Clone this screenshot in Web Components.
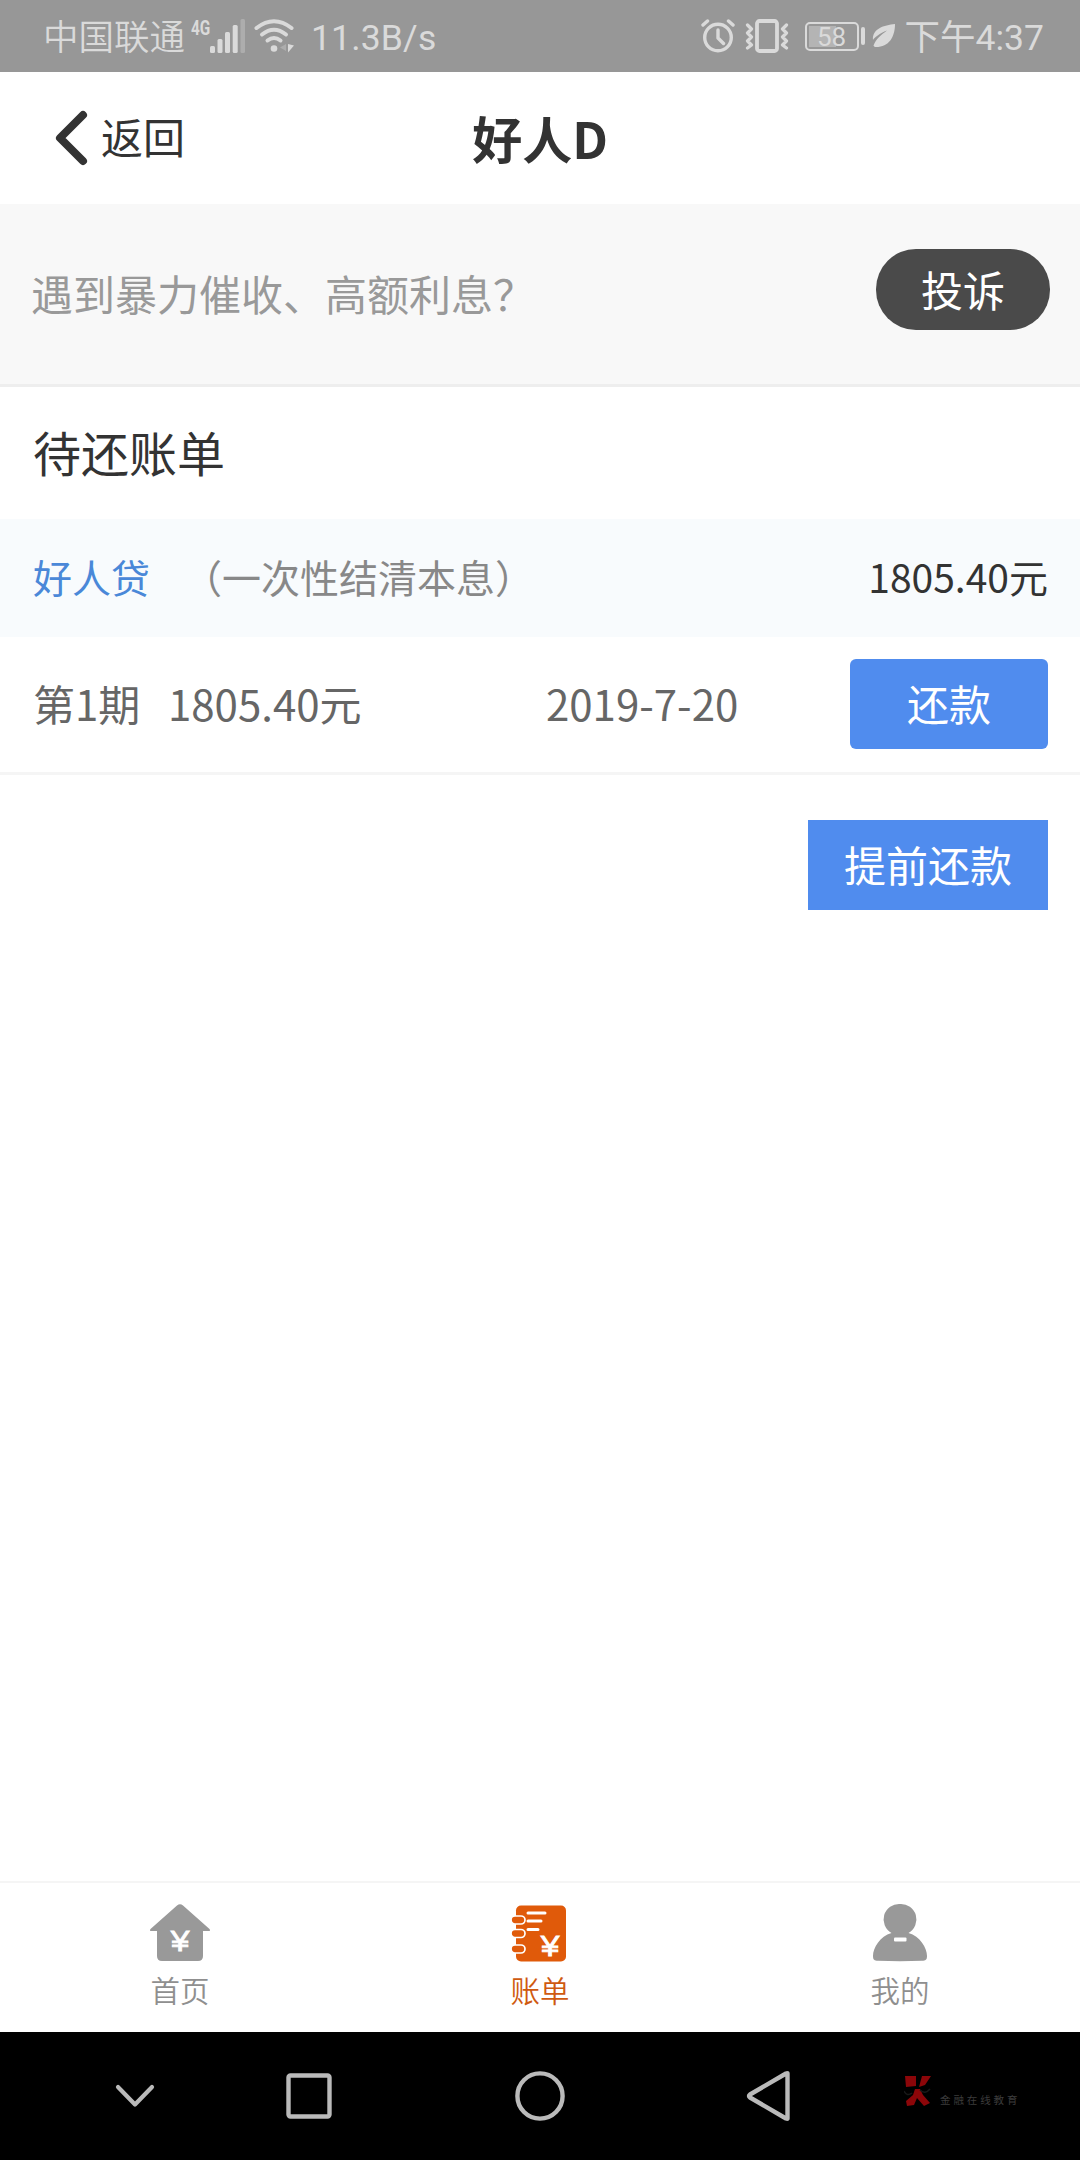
<!DOCTYPE html>
<html lang="zh-CN">
<head>
<meta charset="UTF-8">
<title>好人D</title>
<style>
    body {
        margin: 0;
        background: #fff;
        font-family: "Noto Sans CJK SC", "Noto Sans", sans-serif;
        color: #333;
    }
</style>
</head>
<body>
<loan-app></loan-app>

<script>
/**
 * Base: renders its template into an open shadow root
 */
class BaseElement extends HTMLElement {
    constructor() {
        super();
        this.attachShadow({ mode: 'open' });
    }

    connectedCallback() {
        this.shadowRoot.innerHTML = this.template();
    }
}

// Status bar
class StatusBar extends BaseElement {
    template() {
        return `
            <style>
                :host {
                    display: flex;
                    align-items: center;
                    height: 72px;
                    box-sizing: border-box;
                    padding: 0 36px 0 43px;
                    background: #979797;
                    color: #dadada;
                    font: 400 35.5px/72px Roboto, "Noto Sans CJK SC", sans-serif;
                    white-space: nowrap;
                }
                svg { display: block; flex: none; }
                .carrier, .speed, .time { padding-top: 3px; }
                .carrier { width: 148px; font-weight: 350; }
                .net {
                    width: 19px;
                    height: 36px;
                    font: 700 20px/20px Roboto, sans-serif;
                }
                .net span {
                    display: block;
                    transform: scaleX(0.77);
                    transform-origin: left;
                }
                .wifi { margin-left: 9px; }
                .speed { margin-left: 16px; letter-spacing: 0.15px; }
                .right { display: flex; align-items: center; margin-left: auto; }
                .shake { margin-left: 10px; }
                .battery {
                    display: flex;
                    align-items: center;
                    margin-left: 16px;
                }
                .cell {
                    width: 54px;
                    height: 29px;
                    box-sizing: border-box;
                    border: 2px solid #dadada;
                    border-radius: 5px;
                    background: linear-gradient(#b4b4b4, #b4b4b4) 2px 2px / 27px 21px no-repeat;
                    font: 400 26px/26px Roboto, sans-serif;
                    text-align: center;
                }
                .tip {
                    width: 4px;
                    height: 18px;
                    margin-left: 2px;
                    border-radius: 2px;
                    background: #dadada;
                }
                .leaf { margin: -2px 0 0 7px; }
                .time { margin-left: 9px; }
            </style>
            <span class="carrier">中国联通</span>
            <span class="net"><span>4G</span></span>
            <svg width="35" height="34" viewBox="0 0 35 34" fill="#dadada">
                <rect x="0" y="27" width="5" height="7" rx="1.5"/>
                <rect x="7.5" y="20" width="5" height="14" rx="1.5"/>
                <rect x="15" y="13" width="5" height="21" rx="1.5"/>
                <rect x="22.7" y="6" width="5" height="28" rx="1.5"/>
                <rect x="30.5" y="0" width="4.5" height="34" rx="1.5" fill="#adadad"/>
            </svg>
            <svg class="wifi" width="41" height="34" viewBox="0 0 41 34" fill="none" stroke="#dadada" stroke-width="4" stroke-linecap="round">
                <path d="M2.5 9Q20 -4.500 37.500 9"/>
                <path d="M8 15.500Q20 6 32 15.500"/>
                <path d="M13.500 21.500Q20 16.500 26.500 21.500"/>
                <circle cx="20" cy="29.500" r="3.300" fill="#dadada" stroke="none"/>
                <path d="M32 25v7l-6-3.500z" fill="#adadad" stroke="none"/>
                <path d="M34 25l6 1.500-6 7z" fill="#dadada" stroke="none"/>
            </svg>
            <span class="speed">11.3B/s</span>
            <div class="right">
                <svg width="34" height="34" viewBox="0 0 34 34" fill="none" stroke="#dadada" stroke-width="3.400" stroke-linecap="round" stroke-linejoin="round">
                    <circle cx="17" cy="18.500" r="13.300"/>
                    <path d="M17 11v8l5.500 5.500M2 6l4.500-4M32 6l-4.500-4"/>
                </svg>
                <svg class="shake" width="44" height="34" viewBox="0 0 44 34" fill="none" stroke="#dadada" stroke-width="3.200" stroke-linecap="round" stroke-linejoin="round">
                    <rect x="12" y="2" width="20" height="30" rx="2.500" stroke-width="3.800"/>
                    <path d="M2.500 6l4 4-4 4 4 4-4 4 4 4-4 3M41.500 6l-4 4 4 4-4 4 4 4-4 4 4 3"/>
                </svg>
                <div class="battery">
                    <div class="cell">58</div>
                    <div class="tip"></div>
                </div>
                <svg class="leaf" width="24" height="25" viewBox="0 0 24 25">
                    <path d="M23 1C12 2 0 6 1 17c1 -2 7-7 14-9.500C9 12 4 16 1.500 22.500c.5 1.500 1.500 1.500 2.500 1.500C17 24 23 14 23 1z" fill="#dadada"/>
                </svg>
                <span class="time">下午4:37</span>
            </div>
        `;
    }
}

// Page header with back link
class PageHeader extends BaseElement {
    template() {
        return `
            <style>
                :host {
                    display: grid;
                    grid-template-columns: 1fr auto 1fr;
                    align-items: center;
                    height: 132px;
                    background: #fff;
                }
                .back {
                    display: flex;
                    align-items: center;
                    gap: 13px;
                    padding-left: 54px;
                    font-size: 42px;
                    line-height: 60px;
                }
                .back span { padding-bottom: 4px; }
                svg { display: block; }
                h1 {
                    margin: 0;
                    padding-bottom: 3px;
                    font-size: 50px;
                    font-weight: 700;
                    line-height: 70px;
                }
            </style>
            <div class="back">
                <svg width="34" height="56" viewBox="0 0 34 56" fill="none" stroke="#333" stroke-width="8" stroke-linecap="round" stroke-linejoin="round">
                    <path d="M29 5L6 28l23 23"/>
                </svg>
                <span>返回</span>
            </div>
            <h1><slot></slot></h1>
        `;
    }
}

// Complaint banner
class ComplaintBanner extends BaseElement {
    template() {
        return `
            <style>
                :host {
                    display: flex;
                    justify-content: space-between;
                    align-items: flex-start;
                    height: 183px;
                    box-sizing: border-box;
                    padding: 45px 30px 0 31px;
                    background: #f8f8f8;
                    border-bottom: 3px solid #eee;
                    font-size: 42px;
                }
                .text {
                    padding-top: 14px;
                    line-height: 60px;
                    color: #999;
                }
                button {
                    width: 174px;
                    height: 81px;
                    padding: 0 0 2px;
                    border: 0;
                    border-radius: 40px;
                    background: #4a4a4a;
                    color: #fff;
                    font: inherit;
                    line-height: 78px;
                }
            </style>
            <span class="text"><slot></slot></span>
            <button>投诉</button>
        `;
    }
}

class BlueButton extends BaseElement {
    template() {
        return `
            <style>
                :host { display: block; width: 240px; height: 90px; }
                :host([small]) { width: 198px; }
                button {
                    display: block;
                    width: 100%;
                    height: 100%;
                    padding: 0 0 2px;
                    border: 0;
                    background: #508cee;
                    color: #fff;
                    font: inherit;
                    font-size: 42px;
                    line-height: 88px;
                }
                :host([small]) button { border-radius: 6px; }
            </style>
            <button><slot></slot></button>
        `;
    }
}

// Pending bills
class BillList extends BaseElement {
    template() {
        return `
            <style>
                :host { display: block; }
                h2 {
                    height: 132px;
                    margin: 0;
                    padding-left: 33px;
                    font-size: 48px;
                    font-weight: 400;
                    line-height: 129px;
                }
                .product {
                    display: flex;
                    height: 118px;
                    padding: 0 32px 0 33px;
                    background: #f8fbfd;
                    font-size: 39px;
                    line-height: 115px;
                }
                .name { color: #4a88d8; }
                .type { margin-left: 33px; color: #888; }
                .total { margin-left: auto; }
                .term {
                    display: grid;
                    grid-template-columns: 135px 378px 1fr auto;
                    align-items: center;
                    height: 134px;
                    padding: 0 32px 1px 33px;
                    border-bottom: 3px solid #f5f5f5;
                    font-size: 42px;
                    color: #666;
                }
                .term span { padding-bottom: 4px; }
                .actions {
                    display: flex;
                    justify-content: flex-end;
                    padding: 45px 32px 0;
                }
            </style>
            <h2>待还账单</h2>
            <div class="product">
                <span class="name">好人贷</span>
                <span class="type">（一次性结清本息）</span>
                <span class="total">1805.40元</span>
            </div>
            <div class="term">
                <span>第1期</span>
                <span>1805.40元</span>
                <span>2019-7-20</span>
                <blue-button small>还款</blue-button>
            </div>
            <div class="actions">
                <blue-button>提前还款</blue-button>
            </div>
        `;
    }
}

// One tab; the icon comes in through the slot
class TabItem extends BaseElement {
    template() {
        return `
            <style>
                :host {
                    display: flex;
                    flex-direction: column;
                    align-items: center;
                    padding-top: 20px;
                    color: #8f8f8f;
                    font-size: 29.5px;
                    font-weight: 350;
                    line-height: 40px;
                }
                :host([active]) { color: #cf5a10; }
                ::slotted(svg) { display: block; margin-bottom: 6px; }
            </style>
            <slot></slot>
            <span>${this.getAttribute('label')}</span>
        `;
    }
}

class TabBar extends BaseElement {
    template() {
        return `
            <style>
                :host {
                    display: grid;
                    grid-template-columns: repeat(3, 1fr);
                    height: 151px;
                    box-sizing: border-box;
                    border-top: 2px solid #f5f5f5;
                    background: #fff;
                }
                svg { overflow: visible; }
                text {
                    font: 400 30px "Liberation Sans", sans-serif;
                    fill: #fff;
                    stroke: #fff;
                    stroke-width: 0.8px;
                }
            </style>
            <tab-item label="首页">
                <svg width="62" height="60" viewBox="0 0 62 60">
                    <path d="M28 2.500q3-2.500 6 0L60.500 26q1.500 2-1 2H54v25q0 5-5 5H13q-5 0-5-5V28H2.500q-2.500 0-1-2z" fill="#999"/>
                    <text transform="translate(31 48) scale(1.120 1)" text-anchor="middle">¥</text>
                </svg>
            </tab-item>
            <tab-item label="账单" active>
                <svg width="62" height="60" viewBox="0 0 62 60">
                    <rect x="7" y="2.500" width="50" height="56" rx="5" fill="#e05a0a"/>
                    <g fill="#e05a0a" stroke="#fff" stroke-width="1.700">
                        <rect x="2" y="13" width="14" height="8" rx="4"/>
                        <rect x="2" y="26.500" width="14" height="8" rx="4"/>
                        <rect x="2" y="42" width="14" height="8" rx="4"/>
                    </g>
                    <path d="M19 10h17M19 18h13M19 26.500h10" stroke="#fff" stroke-width="3" stroke-linecap="round"/>
                    <text transform="translate(41 52.500) scale(1.120 1)" text-anchor="middle">¥</text>
                </svg>
            </tab-item>
            <tab-item label="我的">
                <svg width="62" height="60" viewBox="0 0 62 60">
                    <path d="M31 1a15.500 15.500 0 0 1 8.500 29C51 33 58 45 58 53c0 4-1.500 4.500-5 4.800q-22 .8-44 0C5.500 57.500 4 57 4 53c0-8 7-20 18.500-23A15.500 15.500 0 0 1 31 1z" fill="#999"/>
                    <rect x="25" y="34.500" width="12.500" height="4" rx="1" fill="#fff"/>
                </svg>
            </tab-item>
        `;
    }
}

// Android navigation keys and watermark
class SystemNav extends BaseElement {
    template() {
        return `
            <style>
                :host {
                    display: flex;
                    align-items: center;
                    height: 128px;
                    box-sizing: border-box;
                    padding-left: 115px;
                    background: #000;
                }
                svg { display: block; flex: none; }
                .recent { margin-left: 130px; }
                .home { margin-left: 182px; }
                .prev { margin-left: 181px; }
                .mark {
                    display: flex;
                    align-items: flex-end;
                    margin-left: 112px;
                    height: 44px;
                }
                .mark svg { margin-bottom: 11px; }
                .mark span {
                    margin: 0 0 10px 8px;
                    color: #3c3c3c;
                    font-size: 10.500px;
                    line-height: 16px;
                    letter-spacing: 2.900px;
                }
            </style>
            <svg width="40" height="24" viewBox="0 0 40 24" fill="none" stroke="#bababa" stroke-width="4.200" stroke-linecap="round" stroke-linejoin="round">
                <path d="M3 3l17 17.500L37 3"/>
            </svg>
            <svg class="recent" width="48" height="48" viewBox="0 0 48 48" fill="none" stroke="#bababa" stroke-width="4.400">
                <rect x="3.500" y="3.500" width="41" height="41" rx="2"/>
            </svg>
            <svg class="home" width="50" height="50" viewBox="0 0 50 50" fill="none" stroke="#bababa" stroke-width="4.400">
                <circle cx="25" cy="25" r="22.600"/>
            </svg>
            <svg class="prev" width="46" height="50" viewBox="0 0 46 50" fill="none" stroke="#bababa" stroke-width="4.400" stroke-linejoin="round">
                <path d="M41.500 2.500q0-.5-1.500 0L4 23.500q-2 1.500 0 3L40 47.500q1.500.5 1.500 0z"/>
            </svg>
            <div class="mark">
                <svg width="28" height="32" viewBox="0 0 28 32" fill="#8c0609">
                    <path d="M1 1h11v10l-10 1zM18 1h9l-6 9-6 2zM11 14h5l3 6 7 8-6 3-7-8-3 7-7 1-1-5 7-6z"/>
                    <path d="M0 16q3 6 8 2M16 15q5 5 10-1" fill="none" stroke="#191919" stroke-width="1.500"/>
                </svg>
                <span>金融在线教育</span>
            </div>
        `;
    }
}

class LoanApp extends BaseElement {
    template() {
        return `
            <style>
                :host {
                    display: flex;
                    flex-direction: column;
                    width: 1080px;
                    height: 2160px;
                }
                bill-list { flex: 1; }
            </style>
            <status-bar></status-bar>
            <page-header>好人D</page-header>
            <complaint-banner>遇到暴力催收、高额利息？</complaint-banner>
            <bill-list></bill-list>
            <tab-bar></tab-bar>
            <system-nav></system-nav>
        `;
    }
}

customElements.define('status-bar', StatusBar);
customElements.define('page-header', PageHeader);
customElements.define('complaint-banner', ComplaintBanner);
customElements.define('blue-button', BlueButton);
customElements.define('bill-list', BillList);
customElements.define('tab-item', TabItem);
customElements.define('tab-bar', TabBar);
customElements.define('system-nav', SystemNav);
customElements.define('loan-app', LoanApp);
</script>
</body>
</html>
